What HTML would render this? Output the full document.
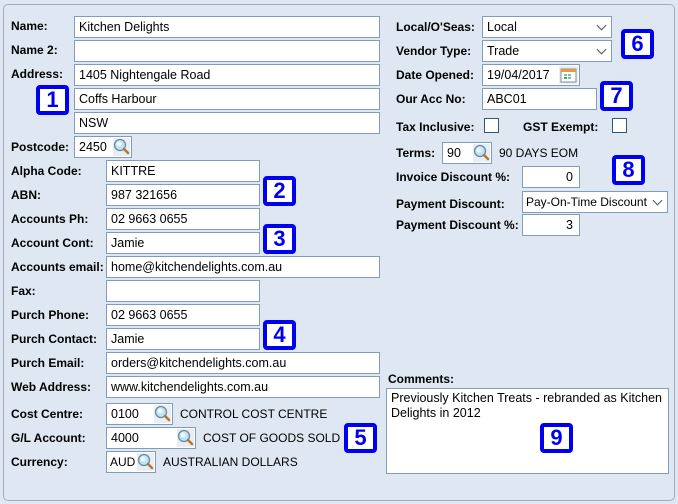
<!DOCTYPE html>
<html><head><meta charset="utf-8"><style>
*{box-sizing:border-box;margin:0;padding:0}
body{width:678px;height:504px;background:#dfe8f2;font-family:"Liberation Sans",Arial,sans-serif;font-size:12px;color:#000;position:relative;overflow:hidden}
.panel{position:absolute;left:3px;top:4px;width:672px;height:497px;border:1px solid #a4acb6;border-radius:5px}
.l{position:absolute;font-weight:bold;font-size:12px;line-height:14px}
.t{position:absolute;font-size:12px;line-height:14px}
.i{position:absolute;height:22px;background:#fff;border:1px solid #7f9db9;font-size:12.5px;line-height:20px;padding-left:4px;white-space:nowrap;overflow:hidden}
.r{text-align:right;padding-right:6px}
.s{position:absolute;top:1px;right:1px;width:17px;height:18px;background:#e8eef4}
.b{position:absolute;width:33px;height:30px;border:4px solid #0000f0;border-radius:4px;background:#fff;color:#0000f0;font-size:22px;line-height:22px;text-align:center;font-weight:bold}
.dd{position:absolute;right:6px;width:7px;height:7px;border-right:1px solid #555;border-bottom:1px solid #555;transform:rotate(45deg);top:5px}
.cb{position:absolute;width:15px;height:15px;background:#fff;border:1px solid #34557a}
</style></head><body>
<div class="panel"></div>
<svg width="0" height="0" style="position:absolute"><defs><g id="mg"><circle cx="7" cy="7" r="5.5" fill="#bfe3f7" stroke="#6c8aa3" stroke-width="1.3"/><circle cx="6" cy="6" r="2.5" fill="#eef8ff"/><path d="M11 11l4 4" stroke="#b07a2e" stroke-width="2.5" stroke-linecap="round"/></g></defs></svg>

<div class="l" style="left:11px;top:19px">Name:</div><div class="i" style="left:74px;top:16px;width:306px">Kitchen Delights</div>
<div class="l" style="left:11px;top:43px">Name 2:</div><div class="i" style="left:74px;top:40px;width:306px"></div>
<div class="l" style="left:11px;top:67px">Address:</div><div class="i" style="left:74px;top:64px;width:306px">1405 Nightengale Road</div>
<div class="i" style="left:74px;top:88px;width:306px">Coffs Harbour</div>
<div class="i" style="left:74px;top:112px;width:306px">NSW</div>
<div class="b" style="left:36px;top:85px">1</div>
<div class="l" style="left:11px;top:140px">Postcode:</div><div class="i" style="left:74px;top:136px;width:58px">2450<div class="s"><svg width="17" height="18"><use href="#mg"/></svg></div></div>

<div class="l" style="left:11px;top:164px">Alpha Code:</div><div class="i" style="left:106px;top:160px;width:154px">KITTRE</div>
<div class="l" style="left:11px;top:188px">ABN:</div><div class="i" style="left:106px;top:184px;width:154px">987 321656</div>
<div class="b" style="left:263px;top:176px">2</div>
<div class="l" style="left:11px;top:212px">Accounts Ph:</div><div class="i" style="left:106px;top:208px;width:154px">02 9663 0655</div>
<div class="l" style="left:11px;top:236px">Account Cont:</div><div class="i" style="left:106px;top:232px;width:154px">Jamie</div>
<div class="b" style="left:263px;top:224px">3</div>
<div class="l" style="left:11px;top:260px">Accounts email:</div><div class="i" style="left:106px;top:256px;width:274px">home@kitchendelights.com.au</div>
<div class="l" style="left:11px;top:284px">Fax:</div><div class="i" style="left:106px;top:280px;width:154px"></div>
<div class="l" style="left:11px;top:308px">Purch Phone:</div><div class="i" style="left:106px;top:304px;width:154px">02 9663 0655</div>
<div class="l" style="left:11px;top:332px">Purch Contact:</div><div class="i" style="left:106px;top:328px;width:154px">Jamie</div>
<div class="b" style="left:263px;top:320px">4</div>
<div class="l" style="left:11px;top:356px">Purch Email:</div><div class="i" style="left:106px;top:352px;width:274px">orders@kitchendelights.com.au</div>
<div class="l" style="left:11px;top:380px">Web Address:</div><div class="i" style="left:106px;top:376px;width:274px">www.kitchendelights.com.au</div>

<div class="l" style="left:11px;top:407px">Cost Centre:</div><div class="i" style="left:106px;top:403px;width:67px">0100<div class="s"><svg width="17" height="18"><use href="#mg"/></svg></div></div><div class="t" style="left:180px;top:407px">CONTROL COST CENTRE</div>
<div class="l" style="left:11px;top:431px">G/L Account:</div><div class="i" style="left:106px;top:427px;width:90px">4000<div class="s"><svg width="17" height="18"><use href="#mg"/></svg></div></div><div class="t" style="left:203px;top:431px">COST OF GOODS SOLD</div>
<div class="b" style="left:344px;top:423px">5</div>
<div class="l" style="left:11px;top:455px">Currency:</div><div class="i" style="left:106px;top:451px;width:50px;padding-left:3px;font-size:12px">AUD<div class="s"><svg width="17" height="18"><use href="#mg"/></svg></div></div><div class="t" style="left:163px;top:455px">AUSTRALIAN DOLLARS</div>

<div class="l" style="left:396px;top:20px">Local/O'Seas:</div><div class="i" style="left:482px;top:16px;width:130px">Local<div class="dd"></div></div>
<div class="l" style="left:396px;top:44px">Vendor Type:</div><div class="i" style="left:482px;top:40px;width:130px">Trade<div class="dd"></div></div>
<div class="b" style="left:621px;top:29px">6</div>
<div class="l" style="left:396px;top:68px">Date Opened:</div><div class="i" style="left:482px;top:64px;width:98px">19/04/2017<div class="s" style="width:19px"><svg width="19" height="18"><rect x="2" y="3" width="15" height="13" fill="#fff" stroke="#7b8fa8"/><rect x="2" y="3" width="15" height="3" fill="#e89a3c"/><rect x="5" y="8" width="3" height="2" fill="#8bb"/><rect x="9" y="8" width="3" height="2" fill="#8bb"/><rect x="5" y="11" width="3" height="2" fill="#4a4"/><rect x="9" y="11" width="3" height="2" fill="#8bb"/></svg></div></div>
<div class="l" style="left:396px;top:92px">Our Acc No:</div><div class="i" style="left:482px;top:88px;width:115px">ABC01</div>
<div class="b" style="left:600px;top:81px">7</div>
<div class="l" style="left:396px;top:120px">Tax Inclusive:</div><div class="cb" style="left:484px;top:118px"></div>
<div class="l" style="left:523px;top:120px">GST Exempt:</div><div class="cb" style="left:612px;top:118px"></div>
<div class="l" style="left:396px;top:146px">Terms:</div><div class="i" style="left:442px;top:142px;width:50px">90<div class="s"><svg width="17" height="18"><use href="#mg"/></svg></div></div><div class="t" style="left:499px;top:146px">90 DAYS EOM</div>
<div class="b" style="left:612px;top:155px">8</div>
<div class="l" style="left:396px;top:170px">Invoice Discount %:</div><div class="i r" style="left:522px;top:166px;width:58px">0</div>
<div class="l" style="left:396px;top:197px">Payment Discount:</div><div class="i" style="left:522px;top:191px;width:146px;padding-left:3px;font-size:12px">Pay-On-Time Discount<div style="position:absolute;right:0;top:0;width:17px;height:20px;background:#fff"></div><div class="dd"></div></div>
<div class="l" style="left:396px;top:218px">Payment Discount %:</div><div class="i r" style="left:522px;top:214px;width:58px">3</div>

<div class="l" style="left:388px;top:372px">Comments:</div>
<div class="i" style="left:386px;top:388px;width:283px;height:86px;white-space:normal;line-height:15px;padding:2px 4px">Previously Kitchen Treats - rebranded as Kitchen Delights in 2012</div>
<div class="b" style="left:540px;top:423px">9</div>
</body></html>
